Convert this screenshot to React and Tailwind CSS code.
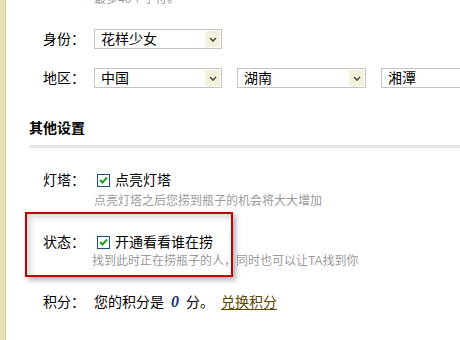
import React from 'react';

const font = "font-['Liberation_Sans','Noto_Sans_CJK_SC',sans-serif]";

const Select = ({ value, width = 'w-[128px]' }) => (
  <div className={`relative ${width} h-[20px] shrink-0 border border-[#c4c4c4] bg-white flex items-center pl-[6px] text-[14px] leading-[18px] text-black`}>
    <span>{value}</span>
    <span className="absolute right-[1px] top-[1px] w-[15px] h-[16px] bg-[#f6f1dc] flex items-center justify-center">
      <svg width="8" height="5" viewBox="0 0 8 5">
        <path d="M1 1 L4 4 L7 1" stroke="#4a4a4a" strokeWidth="1.6" fill="none" />
      </svg>
    </span>
  </div>
);

const Checkbox = () => (
  <span className="w-[13px] h-[13px] shrink-0 border border-[#1c5180] bg-white flex items-center justify-center">
    <svg width="9" height="8" viewBox="0 0 9 8">
      <path d="M1 4 L3.5 6.5 L8 1.5" stroke="#21a121" strokeWidth="2" fill="none" />
    </svg>
  </span>
);

const Row = ({ label, children, className = '' }) => (
  <div className={`flex items-center h-[20px] ${className}`}>
    <div className="w-[65px] pl-[14px] shrink-0 text-[14px] leading-[20px] text-black">{label}</div>
    {children}
  </div>
);

const Hint = ({ children, className = 'ml-[65px]' }) => (
  <div className={`text-[12px] leading-[16px] text-[#9a9a9a] whitespace-nowrap ${className}`}>{children}</div>
);

export default function App() {
  return (
    <div className={`relative w-[460px] h-[340px] overflow-hidden bg-white flex ${font}`}>
      <div className="w-[6px] shrink-0 bg-[#e9e2b6] border-r border-[#d6cd9c]" />
      <div className="flex-1 pl-[23px] whitespace-nowrap">
        <Hint className="ml-[65px] -mt-[9px] leading-[14px]">最多40个字符。</Hint>

        <Row label="身份：" className="mt-[22px]">
          <Select value="花样少女" />
        </Row>

        <Row label="地区：" className="mt-[19px]">
          <div className="flex gap-[15px]">
            <Select value="中国" />
            <Select value="湖南" width="w-[129px]" />
            <Select value="湘潭" />
          </div>
        </Row>

        <div className="mt-[30px] text-[14px] leading-[20px] font-bold text-black">其他设置</div>
        <div className="mt-[7px] h-[3px] bg-[#e6e5e2]" />

        <Row label="灯塔：" className="mt-[22px]">
          <div className="flex items-center gap-[5px] pl-[3px] text-[14px] text-black">
            <Checkbox />
            <span>点亮灯塔</span>
          </div>
        </Row>
        <Hint className="ml-[65px] mt-[3px]">点亮灯塔之后您捞到瓶子的机会将大大增加</Hint>

        <Row label="状态：" className="mt-[23px]">
          <div className="flex items-center gap-[5px] pl-[3px] text-[14px] text-black">
            <Checkbox />
            <span>开通看看谁在捞</span>
          </div>
        </Row>
        <Hint className="ml-[63px] mt-[1px]">找到此时正在捞瓶子的人，同时也可以让TA找到你</Hint>

        <Row label="积分：" className="mt-[23px]">
          <div className="flex items-center text-[14px] text-black">
            <span>您的积分是</span>
            <span className="mx-[7px] font-['Liberation_Serif',serif] font-bold italic text-[16px] text-[#10307a]">0</span>
            <span>分。</span>
            <a href="#" className="ml-[7px] text-[#5a4800] underline underline-offset-2">兑换积分</a>
          </div>
        </Row>
      </div>

      <div className="absolute left-[25px] top-[212px] w-[208px] h-[65px] border-2 border-[#c40000] pointer-events-none shadow-[3px_3px_5px_rgba(0,0,0,0.3),inset_4px_4px_6px_rgba(0,0,0,0.14)]" />
    </div>
  );
}
